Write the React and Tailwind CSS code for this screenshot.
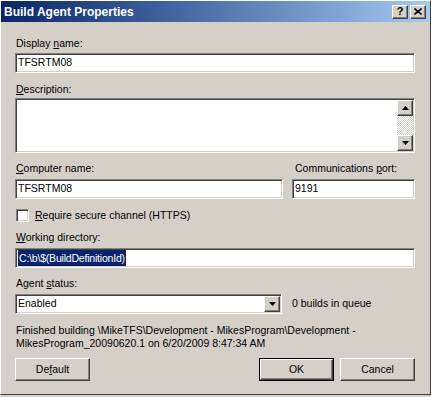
const FONT = "font-['Liberation_Sans',Arial,sans-serif]"

// classic 3D edges
const SUNKEN =
  'border border-t-[#808080] border-l-[#808080] border-r-white border-b-white shadow-[inset_1px_1px_0_#404040,inset_-1px_-1px_0_#d4d0c8]'
const RAISED =
  'border border-t-white border-l-white border-r-[#404040] border-b-[#404040] shadow-[inset_-1px_-1px_0_#808080]'

function Label({ before, k, after, className = '' }) {
  return (
    <div className={`h-[13px] leading-[13px] pl-[1px] ${className}`}>
      {before}
      <u className="underline-offset-[1px]">{k}</u>
      {after}
    </div>
  )
}

function TextBox({ children, className = '' }) {
  return (
    <div className={`h-[20px] bg-white flex items-center pl-[2px] ${SUNKEN} ${className}`}>
      {children}
    </div>
  )
}

function Arrow({ up }) {
  return (
    <svg width="7" height="4" viewBox="0 0 7 4">
      <path d={up ? 'M3.5 0L7 4H0z' : 'M0 0h7L3.5 4z'} fill="#000" />
    </svg>
  )
}

function ArrowButton({ up }) {
  return (
    <div className={`w-[16px] h-[16px] bg-[#d4d0c8] flex items-center justify-center ${RAISED}`}>
      <Arrow up={up} />
    </div>
  )
}

function Button({ children, isDefault }) {
  const inner = (
    <div className={`w-full h-full bg-[#d4d0c8] flex items-center justify-center ${RAISED}`}>
      {children}
    </div>
  )
  return isDefault ? (
    <div className="w-[75px] h-[23px] border border-black">{inner}</div>
  ) : (
    <div className="w-[75px] h-[23px]">{inner}</div>
  )
}

export default function App() {
  return (
    <div className={`w-[431px] h-[397px] bg-[#d4d0c8] text-[10.5px] text-black ${FONT}`}>
      <div className="w-[431px] h-[395px] border border-t-white border-l-white border-r-[#404040] border-b-[#404040] flex flex-col">
        {/* Title bar */}
        <div className="h-[21px] bg-linear-to-r from-[#0a246a] to-[#a6caf0] flex items-center pl-[3px] pr-[4px]">
          <span className="text-white font-bold text-[12px] leading-[14px]">Build Agent Properties</span>
          <div className="ml-auto flex gap-[2px]">
            <div className={`w-[16px] h-[14px] bg-[#d4d0c8] flex items-center justify-center ${RAISED}`}>
              <span className="font-bold text-[11px] leading-[11px]">?</span>
            </div>
            <div className={`w-[16px] h-[14px] bg-[#d4d0c8] flex items-center justify-center ${RAISED}`}>
              <svg width="8" height="7" viewBox="0 0 8 7">
                <path d="M0.5 0.5L7.5 6.5M7.5 0.5L0.5 6.5" stroke="#000" strokeWidth="1.6" />
              </svg>
            </div>
          </div>
        </div>

        {/* Body */}
        <div className="flex flex-col pl-[14px] w-[414px]">
          <Label before="Display " k="n" after="ame:" className="mt-[15px]" />
          <TextBox className="mt-[3px]">TFSRTM08</TextBox>

          <Label k="D" after="escription:" className="mt-[10px]" />
          <div className={`mt-[2px] h-[55px] bg-white flex justify-end ${SUNKEN}`}>
            <div className="w-[16px] mt-[1px] mb-[1px] mr-[1px] flex flex-col">
              <ArrowButton up />
              <div className="flex-1 bg-[repeating-conic-gradient(#ffffff_0_25%,#d4d0c8_0_50%)] bg-[length:2px_2px]" />
              <ArrowButton />
            </div>
          </div>

          <div className="mt-[9px] grid grid-cols-[268px_123px] gap-x-[9px] gap-y-[4px]">
            <Label k="C" after="omputer name:" />
            <Label before="Communications " k="p" after="ort:" className="pl-[3px]" />
            <TextBox>TFSRTM08</TextBox>
            <TextBox>9191</TextBox>
          </div>

          <div className="mt-[10px] h-[13px] flex items-center">
            <div className={`w-[13px] h-[13px] ml-[1px] bg-white ${SUNKEN}`} />
            <span className="ml-[6px] leading-[13px]">
              <u>R</u>equire secure channel (HTTPS)
            </span>
          </div>

          <Label k="W" after="orking directory:" className="mt-[9px]" />
          <TextBox className="mt-[4px] pl-0">
            <span className="bg-[#0a246a] text-white h-[16px] leading-[16px] pl-[1px] pr-[1px] tracking-[-0.2px]">
              C:\b\$(BuildDefinitionId)
            </span>
          </TextBox>

          <Label before="Agent " k="s" after="tatus:" className="mt-[9px]" />
          <div className="mt-[4px] flex items-center">
            <div className={`w-[267px] h-[20px] bg-white flex items-center pl-[2px] pr-[1px] ${SUNKEN}`}>
              <span className="flex-1">Enabled</span>
              <ArrowButton />
            </div>
            <span className="ml-[10px]">0 builds in queue</span>
          </div>

          <div className="mt-[10px] pl-[1px] leading-[13px]">
            Finished building \MikeTFS\Development - MikesProgram\Development -
            <br />
            MikesProgram_20090620.1 on 6/20/2009 8:47:34 AM
          </div>

          <div className="mt-[8px] flex items-center">
            <Button>
              De<u>f</u>ault
            </Button>
            <div className="ml-auto flex gap-[6px]">
              <Button isDefault>OK</Button>
              <Button>Cancel</Button>
            </div>
          </div>
        </div>
      </div>
    </div>
  )
}
